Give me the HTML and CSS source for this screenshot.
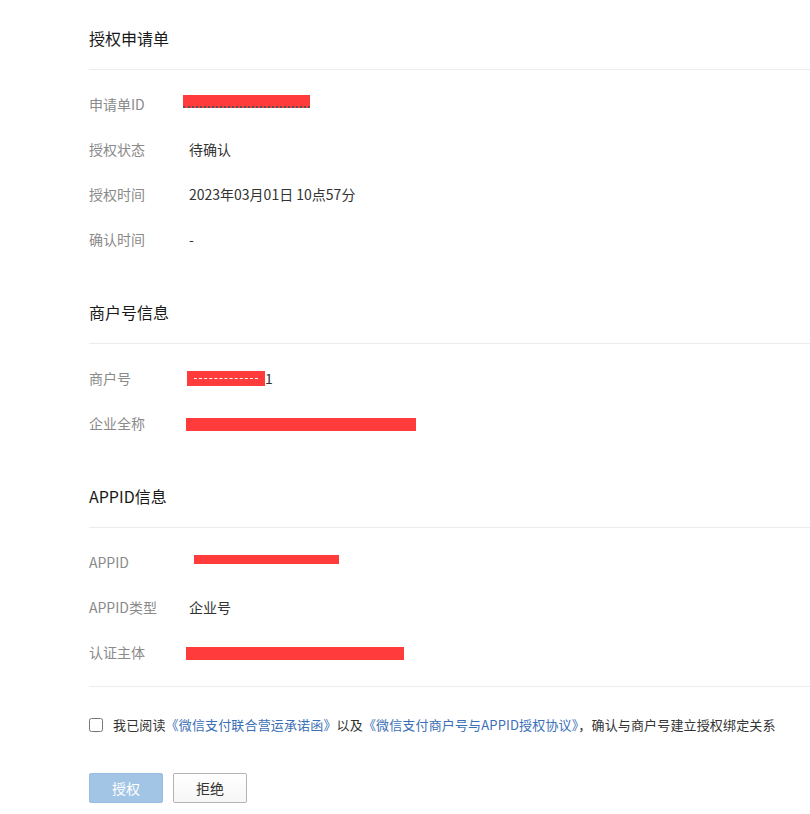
FILE: index.html
```html
<!DOCTYPE html>
<html>
<head>
    <meta charset="utf-8">
    <title>授权申请单</title>
    <link rel="stylesheet" href="styles.css">
</head>
<body>
    <div class="page">
        <div class="section">
            <h2 class="section-title">授权申请单</h2>
            <div class="rows">
                <div class="row">
                    <span class="label">申请单ID</span>
                    <span class="value"><i class="mask mask-id"></i></span>
                </div>
                <div class="row">
                    <span class="label">授权状态</span>
                    <span class="value">待确认</span>
                </div>
                <div class="row">
                    <span class="label">授权时间</span>
                    <span class="value">2023年03月01日 10点57分</span>
                </div>
                <div class="row">
                    <span class="label">确认时间</span>
                    <span class="value">-</span>
                </div>
            </div>
        </div>

        <div class="section">
            <h2 class="section-title">商户号信息</h2>
            <div class="rows">
                <div class="row">
                    <span class="label">商户号</span>
                    <span class="value"><span class="mch-tail">1</span><i class="mask mask-mch"></i></span>
                </div>
                <div class="row">
                    <span class="label">企业全称</span>
                    <span class="value"><i class="mask mask-name"></i></span>
                </div>
            </div>
        </div>

        <div class="section">
            <h2 class="section-title">APPID信息</h2>
            <div class="rows">
                <div class="row">
                    <span class="label">APPID</span>
                    <span class="value"><i class="mask mask-appid"></i></span>
                </div>
                <div class="row">
                    <span class="label">APPID类型</span>
                    <span class="value">企业号</span>
                </div>
                <div class="row">
                    <span class="label">认证主体</span>
                    <span class="value"><i class="mask mask-subject"></i></span>
                </div>
            </div>
        </div>

        <div class="agree">
            <label class="agree-line">
                <input type="checkbox" class="agree-box">
                <span>我已阅读<a href="#" class="link">《微信支付联合营运承诺函》</a>以及<a href="#" class="link">《微信支付商户号与APPID授权协议》</a>，确认与商户号建立授权绑定关系</span>
            </label>
        </div>

        <div class="actions">
            <button class="btn btn-primary" disabled>授权</button>
            <button class="btn btn-default">拒绝</button>
        </div>
    </div>
</body>
</html>
```

FILE: styles.css
```css
* {
    box-sizing: border-box;
    margin: 0;
    padding: 0;
}

body {
    margin: 0;
    background: #ffffff;
    font-family: "Noto Sans CJK SC", "Liberation Sans", sans-serif;
    font-size: 14px;
    color: #333333;
}

.page {
    padding-left: 89px;
}

.section + .section {
    margin-top: 13px;
}

.section-title {
    font-size: 16px;
    font-weight: normal;
    line-height: 22px;
    color: #1a1a1a;
    padding-top: 27px;
    padding-bottom: 20px;
    border-bottom: 1px solid #ececec;
}

.rows {
    padding-top: 11px;
}

.row {
    display: flex;
    align-items: center;
    height: 45px;
}

.label {
    width: 100px;
    flex-shrink: 0;
    color: #8a8a8a;
    line-height: 20px;
}

.value {
    position: relative;
    display: block;
    line-height: 20px;
    height: 20px;
    color: #333333;
    white-space: nowrap;
}

.mch-tail {
    padding-left: 76px;
}

/* redaction bars over the hidden values */
.mask {
    position: absolute;
    background: #ff3b3b;
}

.mask-id {
    left: -6px;
    top: 1px;
    width: 127px;
    height: 13px;
    border-bottom: 2px dotted #555555;
}

.mask-mch {
    left: -2px;
    top: 3px;
    width: 78px;
    height: 15px;
}

.mask-mch::after {
    content: "";
    position: absolute;
    left: 7px;
    right: 7px;
    top: 7px;
    border-top: 1px dashed #ffffff;
}

.mask-name {
    left: -3px;
    top: 5px;
    width: 230px;
    height: 13px;
}

.mask-appid {
    left: 5px;
    top: 3px;
    width: 145px;
    height: 9px;
}

.mask-subject {
    left: -3px;
    top: 5px;
    width: 218px;
    height: 13px;
}

.agree {
    margin-top: 12px;
    border-top: 1px solid #ececec;
    padding-top: 28px;
}

.agree-line {
    display: flex;
    align-items: center;
    font-size: 13px;
    line-height: 20px;
    letter-spacing: 0.15px;
    color: #333333;
    cursor: pointer;
}

.agree-box {
    width: 14px;
    height: 14px;
    margin: 0 10px 0 0;
    flex-shrink: 0;
}

.link {
    color: #3b6fb6;
    text-decoration: none;
}

.actions {
    display: flex;
    gap: 10px;
    margin-top: 38px;
}

.btn {
    width: 74px;
    height: 30px;
    font-family: "Noto Sans CJK SC", "Liberation Sans", sans-serif;
    font-size: 14px;
    border-radius: 2px;
    cursor: pointer;
}

.btn-primary {
    background: #a3c5e5;
    border: 1px solid #98bde0;
    color: #ffffff;
}

.btn-default {
    background: linear-gradient(#ffffff, #f6f6f6);
    border: 1px solid #b3b3b3;
    color: #333333;
}
```
